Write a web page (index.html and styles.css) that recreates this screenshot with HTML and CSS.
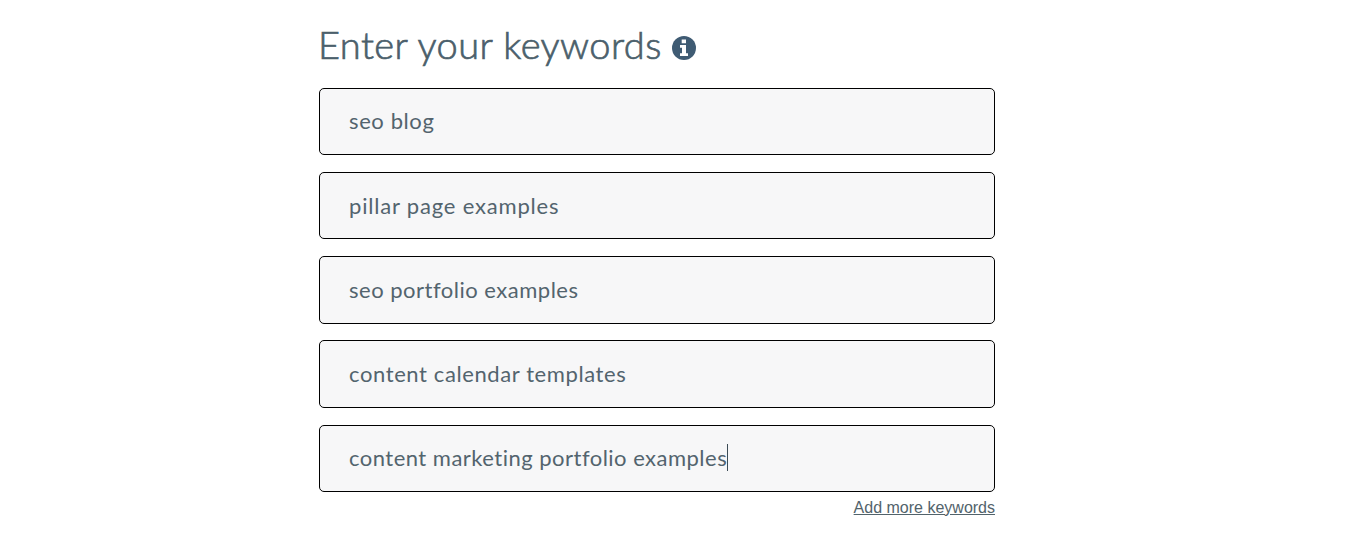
FILE: index.html
```html
<!DOCTYPE html>
<html lang="en">
<head>
<meta charset="utf-8">
<title>Keywords</title>
<link rel="stylesheet" href="styles.css">
</head>
<body>
<main class="panel">
  <h1 class="title"><span class="title-text">Enter your keywords</span>
    <svg class="info" viewBox="0 0 24 24" aria-hidden="true"><circle cx="12" cy="12" r="12" fill="#3f5b73"/><path fill="#fff" d="M9.700 3.600h4.300v3.600H9.700zM8 9h6v8.200h2v2.800H8v-2.800h2v-5.400H8z"/></svg>
  </h1>
  <div class="fields">
    <div class="field raised"><span class="value v1">seo blog</span></div>
    <div class="field"><span class="value v2">pillar page examples</span></div>
    <div class="field tall"><span class="value v3">seo portfolio examples</span></div>
    <div class="field tall close"><span class="value v4">content calendar templates</span></div>
    <div class="field raised"><span class="value v5">content marketing portfolio examples</span><span class="caret"></span></div>
  </div>
  <a class="more">Add more keywords</a>
</main>
</body>
</html>
```
FILE: styles.css
```css
* { box-sizing: border-box; }
body { margin: 0; background: #fff; font-family: Lato, sans-serif; color: #4b5f6b; }
.panel { width: 676px; margin-left: 319px; padding-top: 19px; display: flex; flex-direction: column; }
.title { margin: 0; height: 69px; display: flex; align-items: flex-start; gap: 10px; font-weight: 300; font-size: 38px; line-height: 50px; }
.title-text { width: 343px; margin-left: -1px; margin-right: 1px; white-space: nowrap; letter-spacing: 0.45px; -webkit-text-stroke: 0.7px #4b5f6b; }
.info { width: 24px; height: 24px; margin-top: 17px; }
.fields { display: flex; flex-direction: column; gap: 17px; }
.field { height: 67px; border: 1px solid #000; border-radius: 5px; background: #f7f7f8; padding: 0 0 1px 29px; display: flex; align-items: center; font-size: 22px; white-space: nowrap; color: #53646e; }
.raised { padding-bottom: 2px; }
.tall { height: 68px; }
.close { margin-top: -1px; }
.value { font-variant-ligatures: none; }
.v1 { letter-spacing: 0.6px; }
.v2 { letter-spacing: 0.82px; }
.v3 { letter-spacing: 0.5px; }
.v4 { letter-spacing: 0.6px; }
.v5 { width: 378px; letter-spacing: 0.48px; }
.caret { width: 1px; height: 27px; background: #3c4c56; }
.more { align-self: flex-end; margin-top: 6px; font: 16px/20px "Liberation Sans", Arial, sans-serif; color: #52636b; text-decoration: underline; }
```
